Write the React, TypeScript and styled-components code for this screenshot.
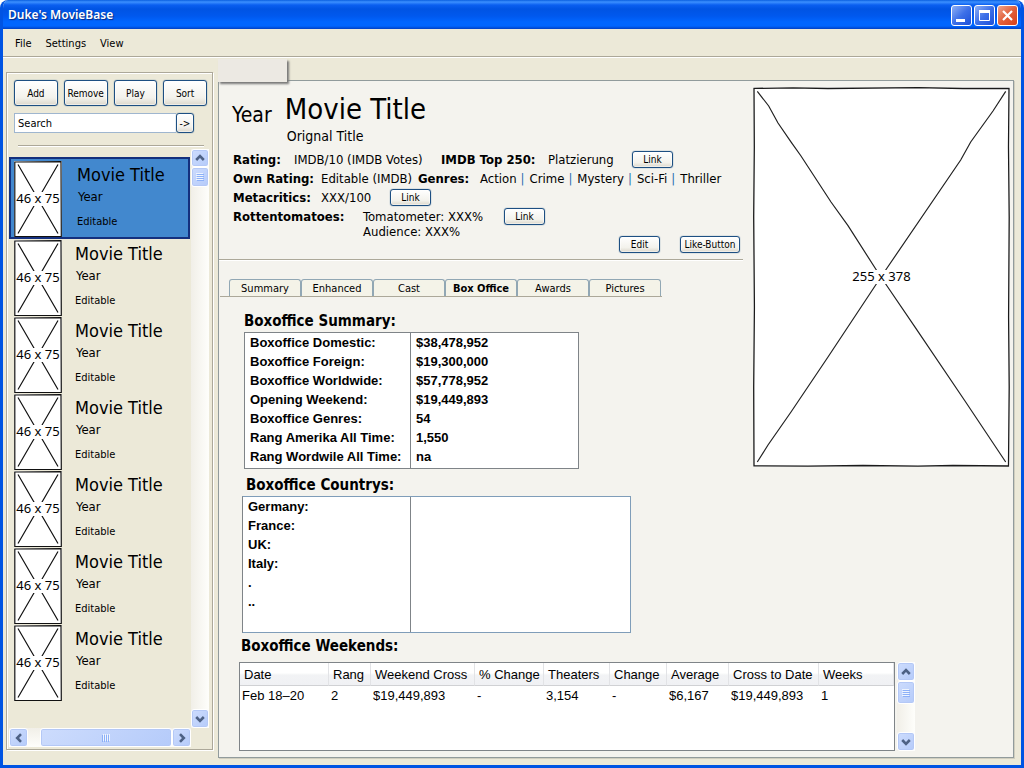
import React from 'react';
import styled, { createGlobalStyle, css } from 'styled-components';

const UI_FONT = '"DejaVu Sans Condensed", "DejaVu Sans", sans-serif';
const DATA_FONT = '"Liberation Sans", Arial, sans-serif';

const GlobalStyle = createGlobalStyle`
  *, *::before, *::after { box-sizing: border-box; }
  body { margin: 0; background: #fff; font-family: ${UI_FONT}; font-size: 13px; color: #000; }
  button, input { font-family: inherit; color: inherit; }
  h1, h2, p, ul { margin: 0; padding: 0; font-weight: normal; }
`;

const Window = styled.div`
  min-height: 100vh;
  display: flex;
  flex-direction: column;
  background: #ece9d8;
  border: solid #0054e3;
  border-width: 0 3px 3px;
  border-radius: 8px 8px 0 0;
  overflow: hidden;
`;

const TitleBar = styled.header`
  display: flex;
  align-items: center;
  justify-content: space-between;
  height: 29px;
  margin: 0 -3px;
  padding: 0 6px 0 8px;
  background: linear-gradient(#0a5fe0 0, #3c90ff 2px, #0a5ff0 5px, #0054e3 9px, #0058ee 16px, #0066ff 22px, #0066ff 26px, #0040c4 29px);
`;

const AppName = styled.h1`
  font: 600 12px/28px "Noto Sans", sans-serif;
  color: #fff;
  text-shadow: 1px 1px 1px #0a2a80;
`;

const CaptionButtons = styled.div`
  display: flex;
  gap: 2px;
  padding-top: 2px;
`;

const CaptionButton = styled.button<{ $close?: boolean }>`
  width: 21px;
  height: 21px;
  padding: 0;
  border: 1px solid #fff;
  border-radius: 3px;
  background: ${p => p.$close
    ? 'linear-gradient(135deg, #f0a58c, #e2603a 50%, #d8401a)'
    : 'linear-gradient(135deg, #8fb0f5, #3d70e8 50%, #1c4fd8)'};
  svg { display: block; }
`;

const MenuBar = styled.nav`
  display: flex;
  gap: 14px;
  height: 29px;
  padding: 0 12px;
  border-bottom: 1px solid #fff;
  box-shadow: inset 0 -1px #aca899;
`;

const MenuItem = styled.button`
  padding: 0;
  border: 0;
  background: none;
  font-size: 11px;
`;

const Body = styled.div`
  flex: 1;
  display: flex;
  gap: 5px;
  padding: 14px 7px 7px 3px;
`;

const Sidebar = styled.aside`
  display: flex;
  flex-direction: column;
  flex: none;
  width: 207px;
  margin-bottom: 8px;
  border: 1px solid #aca899;
  box-shadow: inset 1px 1px #fff, 1px 1px #fff;
`;

const Toolbar = styled.div`
  display: flex;
  gap: 6px;
  padding: 7px 5px 7px 7px;
`;

const XpButton = styled.button<{ $h?: number; $w?: number }>`
  flex: ${p => (p.$w ? 'none' : '1 1 0')};
  width: ${p => (p.$w ? p.$w + 'px' : 'auto')};
  min-width: 0;
  height: ${p => p.$h ?? 17}px;
  padding: 0;
  border: 1px solid #1d4f82;
  border-radius: 3px;
  background: linear-gradient(#fff, #f3f2ec 70%, #dcd8cc);
  box-shadow: inset 0 0 0 1px #ffffff80, 0 0 1px #1d4f82;
  font-size: 10px;
  white-space: nowrap;
`;

const SearchRow = styled.form`
  display: flex;
  padding: 0 18px 0 7px;
`;

const SearchBox = styled.input`
  flex: 1;
  min-width: 0;
  height: 20px;
  padding: 0 3px;
  border: 1px solid #9fb6cf;
  border-right: 0;
  background: #fff;
  font-size: 11px;
  &::placeholder { color: #000; opacity: 1; }
`;

const Groove = styled.hr<{ $margin: string }>`
  height: 2px;
  margin: ${p => p.$margin};
  border: 0;
  border-top: 1px solid #aca899;
  border-bottom: 1px solid #fff;
`;

const ListArea = styled.div`
  flex: 1;
  display: grid;
  grid-template-columns: 1fr 18px;
  grid-template-rows: 1fr 19px;
  padding: 0 3px 2px 2px;
`;

const MovieList = styled.ul`
  list-style: none;
  padding-top: 8px;
`;

const MovieItem = styled.li<{ $selected?: boolean }>`
  display: flex;
  gap: 13px;
  margin-bottom: 1px;
  padding: 0 0 0 5px;
  ${p => p.$selected && css`
    gap: 15px;
    margin-right: 1px;
    padding: 2px 0 0 3px;
    border: 2px solid #14307e;
    background: #4288ce;
  `}
`;

const MovieText = styled.div`
  display: flex;
  flex-direction: column;
  padding-top: 2px;
`;

const MovieTitle = styled.h2`
  font-size: 18px;
  line-height: 24px;
  white-space: nowrap;
`;

const MovieYear = styled.p`
  padding-left: 1px;
  font-size: 13px;
  line-height: 20px;
`;

const MovieNote = styled.p`
  padding-top: 6px;
  font-size: 11px;
  line-height: 18px;
`;

const Picture = styled.figure<{ $w: number; $h: number }>`
  flex: none;
  display: grid;
  place-items: center;
  width: ${p => p.$w}px;
  height: ${p => p.$h}px;
  margin: 0;
  background: #fff;
  > * { grid-area: 1 / 1; }
`;

const PictureLabel = styled.figcaption`
  padding-bottom: 2px;
  background: #fff;
  font: 13px/12px "Noto Sans", sans-serif;
  white-space: nowrap;
`;

const VTrack = styled.div`
  display: flex;
  flex-direction: column;
  background: linear-gradient(90deg, #f1efe8, #fefefb);
`;

const HTrack = styled.div`
  display: flex;
  background: linear-gradient(#f1efe8, #fefefb);
`;

const ScrollPart = styled.button<{ $w: number; $h: number; $grow?: boolean }>`
  flex: ${p => (p.$grow ? '1' : 'none')};
  display: grid;
  place-items: center;
  width: ${p => p.$w}px;
  height: ${p => p.$h}px;
  padding: 0;
  border: 1px solid #fff;
  border-radius: 3px;
  background: linear-gradient(135deg, #cddcfd, #b5cbfa);
  box-shadow: inset 0 0 0 1px #b4c8f6;
`;

const Spacer = styled.div<{ $w?: number }>`
  flex: ${p => (p.$w ? `0 0 ${p.$w}px` : '1')};
`;

const Panel = styled.main`
  position: relative;
  flex: 1;
  min-width: 0;
  margin-top: 8px;
  border: 1px solid #919b9c;
  background: #f4f3ee;
  box-shadow: 1px 1px #d0cebf;
`;

const Flap = styled.div`
  position: absolute;
  top: -22px;
  left: -1px;
  width: 69px;
  height: 23px;
  background: #ece9e3;
  box-shadow: 2px 2px 2px #777;
`;

const Upper = styled.div`
  display: flex;
  align-items: flex-start;
  padding: 6px 3px 0 0;
`;

const Details = styled.div`
  flex: 1;
  min-width: 0;
  padding-right: 10px;
`;

const Heading = styled.div`
  display: flex;
  gap: 13px;
  height: 61px;
  padding: 2px 0 0 13px;
`;

const HeadYear = styled.p`
  font-size: 21px;
  line-height: 52px;
`;

const HeadTitle = styled.h1`
  font-size: 29px;
  line-height: 40px;
`;

const HeadOriginal = styled.p`
  padding-left: 2px;
  font-size: 14px;
  line-height: 14px;
`;

const Facts = styled.div`
  padding: 3px 0 0 14px;
`;

const FactRow = styled.div`
  display: flex;
  align-items: flex-start;
  min-height: 19px;
  font-size: 13px;
  line-height: 18px;
  white-space: nowrap;
`;

const Label = styled.span<{ $w: number }>`
  flex: none;
  width: ${p => p.$w}px;
  font-weight: bold;
`;

const Value = styled.span<{ $w?: number }>`
  flex: none;
  width: ${p => (p.$w ? p.$w + 'px' : 'auto')};
`;

const ScoreList = styled.div`
  flex: none;
  width: 141px;
  padding-top: 1px;
  line-height: 15px;
`;

const Bar = styled.span`
  padding: 0 5px 0 4px;
  color: #2a6eb0;
`;

const Actions = styled.div`
  display: flex;
  justify-content: flex-end;
  gap: 20px;
  margin-top: -3px;
  padding-right: 3px;
`;

const Tabs = styled.div`
  display: flex;
  width: 442px;
  margin: 0 0 8px 1px;
  padding-left: 9px;
  border-bottom: 1px solid #aca899;
`;

const Tab = styled.button<{ $active?: boolean }>`
  width: 72px;
  height: 17px;
  padding: 0;
  border: 1px solid #91a7b4;
  border-bottom: 0;
  border-radius: 3px 3px 0 0;
  background: #f4f3e8;
  font-size: 11px;
  font-weight: ${p => (p.$active ? 'bold' : 'normal')};
  white-space: nowrap;
`;

const SectionTitle = styled.h2<{ $indent: number; $top?: number }>`
  padding: ${p => p.$top ?? 5}px 0 0 ${p => p.$indent}px;
  font-size: 15px;
  font-weight: bold;
  line-height: 22px;
`;

const FigureTable = styled.table<{ $indent: number; $w: number; $label: number; $edge: string }>`
  width: ${p => p.$w}px;
  margin-left: ${p => p.$indent}px;
  border: 1px solid ${p => p.$edge};
  border-left-color: #7f8488;
  border-spacing: 0;
  background: #fff;
  font: bold 13px/19px ${DATA_FONT};
  text-align: left;
  white-space: nowrap;
  th, td { height: 19px; padding: 0 0 0 5px; }
  th { width: ${p => p.$label}px; border-right: 1px solid #7f8488; }
  tr:last-child > * { height: 21px; padding-bottom: 2px; }
`;

const WeekendArea = styled.div`
  display: flex;
  gap: 2px;
  padding: 5px 98px 6px 20px;
`;

const WeekendBox = styled.div`
  flex: 1;
  min-width: 0;
  height: 89px;
  border: 1px solid #7f8488;
  background: #fff;
`;

const WeekendTable = styled.table`
  width: 100%;
  table-layout: fixed;
  border-spacing: 0;
  font: 13px/20px ${DATA_FONT};
  text-align: left;
  white-space: nowrap;
  th {
    height: 23px;
    padding: 2px 0 0 4px;
    border-right: 1px solid #e2e3e6;
    border-bottom: 1px solid #d0d1d4;
    background: linear-gradient(#fff 45%, #f2f3f5 55%, #f0f1f4);
    font-weight: normal;
  }
  td { padding: 0 0 0 2px; }
`;

const Chevron = ({ turn }: { turn: number }) => (
  <svg width="10" height="10" viewBox="0 0 10 10" aria-hidden="true">
    <path d="M1.2 7 5 3.2 8.8 7" fill="none" stroke="#4d6185" strokeWidth="2.6" transform={`rotate(${turn} 5 5)`} />
  </svg>
);

const Grip = ({ turn = 0 }: { turn?: number }) => (
  <svg width="8" height="8" viewBox="0 0 8 8" aria-hidden="true">
    <g transform={`rotate(${turn} 4 4)`}>
      <path d="M0 .5h7M0 2.5h7M0 4.5h7M0 6.5h7" stroke="#eef4fe" />
      <path d="M1 1.5h7M1 3.5h7M1 5.5h7M1 7.5h7" stroke="#8cb0f8" />
    </g>
  </svg>
);

const Thumb = () => (
  <Picture $w={48} $h={76}>
    <svg width="48" height="76" viewBox="0 0 48 76" aria-hidden="true">
      <path d="M.8 1 47 .6 47.3 75.3 .8 75.5Z" fill="#fff" stroke="#111" strokeWidth="1.2" />
      <path d="M4 3.5 44 72.5M44 3.5 4 72.5" stroke="#111" strokeWidth="1.2" />
    </svg>
    <PictureLabel>46 x 75</PictureLabel>
  </Picture>
);

const Poster = () => (
  <Picture $w={257} $h={380}>
    <svg width="257" height="380" viewBox="0 0 257 380" aria-hidden="true">
      <path d="M1 1.4 40 .8 75 1.5 165 .7 210 1.5 256 1.3 255.5 60 256.2 130 255.6 230 256.2 300 255.5 379 200 378.5 165 379.2 110 378.5 55 379.2 1 378.8 .7 300 1.4 220 .7 130 1.3 60Z" fill="#fff" stroke="#1a1a1a" strokeWidth="1.3" />
      <path d="M4.3 4.3 15.7 19 25 36 38.3 55.3 48 69 78 115 95 138.7 124 184 132 196 161.7 239.7 212 314 252.7 375M252.7 4.3 240 24 217.7 55 207.7 73 132 184 124 196 75 270 38 325 15 358 4.3 375" fill="none" stroke="#222" strokeWidth="1.2" />
    </svg>
    <PictureLabel>255 x 378</PictureLabel>
  </Picture>
);

const movies = [0, 1, 2, 3, 4, 5, 6];
const genres = ['Action', 'Crime', 'Mystery', 'Sci-Fi', 'Thriller'];
const tabs = ['Summary', 'Enhanced', 'Cast', 'Box Office', 'Awards', 'Pictures'];
const summary = [
  ['Boxoffice Domestic:', '$38,478,952'],
  ['Boxoffice Foreign:', '$19,300,000'],
  ['Boxoffice Worldwide:', '$57,778,952'],
  ['Opening Weekend:', '$19,449,893'],
  ['Boxoffice Genres:', '54'],
  ['Rang Amerika All Time:', '1,550'],
  ['Rang Wordwile All Time:', 'na'],
];
const countries = ['Germany:', 'France:', 'UK:', 'Italy:', '.', '..', ''];
const weekends: [string, string, number?][] = [
  ['Date', 'Feb 18–20', 89],
  ['Rang', '2', 42],
  ['Weekend Cross', '$19,449,893', 104],
  ['% Change', '-', 69],
  ['Theaters', '3,154', 66],
  ['Change', '-', 57],
  ['Average', '$6,167', 62],
  ['Cross to Date', '$19,449,893', 90],
  ['Weeks', '1'],
];

export default function App() {
  return (
    <>
      <GlobalStyle />
      <Window>
        <TitleBar>
          <AppName>Duke's MovieBase</AppName>
          <CaptionButtons>
            <CaptionButton aria-label="Minimize">
              <svg width="19" height="19"><path d="M4 14.5h9" stroke="#fff" strokeWidth="3" /></svg>
            </CaptionButton>
            <CaptionButton aria-label="Maximize">
              <svg width="19" height="19"><path d="M4.5 5v9.5h10V5" fill="none" stroke="#fff" /><path d="M4 5.5h11" stroke="#fff" strokeWidth="3" /></svg>
            </CaptionButton>
            <CaptionButton $close aria-label="Close">
              <svg width="19" height="19"><path d="M5 5l9 9M14 5l-9 9" stroke="#fff" strokeWidth="2.2" /></svg>
            </CaptionButton>
          </CaptionButtons>
        </TitleBar>
        <MenuBar>
          <MenuItem>File</MenuItem>
          <MenuItem>Settings</MenuItem>
          <MenuItem>View</MenuItem>
        </MenuBar>
        <Body>
          <Sidebar>
            <Toolbar>
              {['Add', 'Remove', 'Play', 'Sort'].map(t => <XpButton key={t} $h={26}>{t}</XpButton>)}
            </Toolbar>
            <SearchRow onSubmit={e => e.preventDefault()}>
              <SearchBox aria-label="Search" placeholder="Search" />
              <XpButton $w={18} $h={20}>-&gt;</XpButton>
            </SearchRow>
            <Groove $margin="12px 8px 2px 11px" />
            <ListArea>
              <MovieList>
                {movies.map(i => (
                  <MovieItem key={i} $selected={i === 0}>
                    <Thumb />
                    <MovieText>
                      <MovieTitle>Movie Title</MovieTitle>
                      <MovieYear>Year</MovieYear>
                      <MovieNote>Editable</MovieNote>
                    </MovieText>
                  </MovieItem>
                ))}
              </MovieList>
              <VTrack>
                <ScrollPart $w={18} $h={18} aria-label="Scroll up"><Chevron turn={0} /></ScrollPart>
                <ScrollPart $w={18} $h={20} aria-label="List position"><Grip /></ScrollPart>
                <Spacer />
                <ScrollPart $w={18} $h={19} aria-label="Scroll down"><Chevron turn={180} /></ScrollPart>
              </VTrack>
              <HTrack>
                <ScrollPart $w={19} $h={19} aria-label="Scroll left"><Chevron turn={270} /></ScrollPart>
                <Spacer $w={12} />
                <ScrollPart $grow $w={130} $h={19} aria-label="Sideways position"><Grip turn={90} /></ScrollPart>
                <ScrollPart $w={19} $h={19} aria-label="Scroll right"><Chevron turn={90} /></ScrollPart>
              </HTrack>
            </ListArea>
          </Sidebar>
          <Panel>
            <Flap />
            <Upper>
              <Details>
                <Heading>
                  <HeadYear>Year</HeadYear>
                  <div>
                    <HeadTitle>Movie Title</HeadTitle>
                    <HeadOriginal>Orignal Title</HeadOriginal>
                  </div>
                </Heading>
                <Facts>
                  <FactRow>
                    <Label $w={61}>Rating:</Label>
                    <Value $w={147}>IMDB/10 (IMDB Votes)</Value>
                    <Label $w={107}>IMDB Top 250:</Label>
                    <Value $w={84}>Platzierung</Value>
                    <XpButton $w={41}>Link</XpButton>
                  </FactRow>
                  <FactRow>
                    <Label $w={88}>Own Rating:</Label>
                    <Value $w={97}>Editable (IMDB)</Value>
                    <Label $w={62}>Genres:</Label>
                    <Value>
                      {genres.map((g, i) => (
                        <React.Fragment key={g}>{i > 0 && <Bar>|</Bar>}{g}</React.Fragment>
                      ))}
                    </Value>
                  </FactRow>
                  <FactRow>
                    <Label $w={88}>Metacritics:</Label>
                    <Value $w={69}>XXX/100</Value>
                    <XpButton $w={41}>Link</XpButton>
                  </FactRow>
                  <FactRow>
                    <Label $w={130}>Rottentomatoes:</Label>
                    <ScoreList>
                      <p>Tomatometer: XXX%</p>
                      <p>Audience: XXX%</p>
                    </ScoreList>
                    <XpButton $w={41}>Link</XpButton>
                  </FactRow>
                </Facts>
                <Actions>
                  <XpButton $w={41}>Edit</XpButton>
                  <XpButton $w={60}>Like-Button</XpButton>
                </Actions>
                <Groove $margin="6px 0 18px" />
                <Tabs>
                  {tabs.map(t => <Tab key={t} $active={t === 'Box Office'}>{t}</Tab>)}
                </Tabs>
                <SectionTitle $indent={25}>Boxoffice Summary:</SectionTitle>
                <FigureTable $indent={25} $w={335} $label={166} $edge="#7f8488">
                  <tbody>
                    {summary.map(([k, v]) => <tr key={k}><th scope="row">{k}</th><td>{v}</td></tr>)}
                  </tbody>
                </FigureTable>
                <SectionTitle $indent={27}>Boxoffice Countrys:</SectionTitle>
                <FigureTable $indent={23} $w={389} $label={168} $edge="#7f9db9">
                  <tbody>
                    {countries.map((k, i) => <tr key={i}><th scope="row">{k}</th><td /></tr>)}
                  </tbody>
                </FigureTable>
              </Details>
              <Poster />
            </Upper>
            <SectionTitle $indent={22} $top={2}>Boxoffice Weekends:</SectionTitle>
            <WeekendArea>
              <WeekendBox>
                <WeekendTable>
                  <colgroup>
                    {weekends.map(([h, , w]) => <col key={h} width={w} />)}
                  </colgroup>
                  <thead><tr>{weekends.map(([h]) => <th key={h} scope="col">{h}</th>)}</tr></thead>
                  <tbody><tr>{weekends.map(([h, v]) => <td key={h}>{v}</td>)}</tr></tbody>
                </WeekendTable>
              </WeekendBox>
              <VTrack>
                <ScrollPart $w={18} $h={19} aria-label="Scroll up"><Chevron turn={0} /></ScrollPart>
                <ScrollPart $w={18} $h={23} aria-label="Table position"><Grip /></ScrollPart>
                <Spacer />
                <ScrollPart $w={18} $h={19} aria-label="Scroll down"><Chevron turn={180} /></ScrollPart>
              </VTrack>
            </WeekendArea>
          </Panel>
        </Body>
      </Window>
    </>
  );
}
